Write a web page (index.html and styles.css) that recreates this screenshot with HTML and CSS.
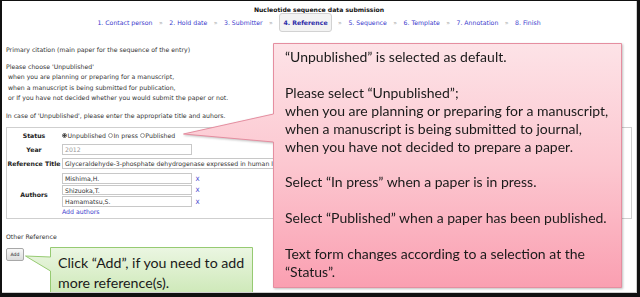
FILE: index.html
```html
<!DOCTYPE html>
<html>

<head>
    <link rel="stylesheet" href="styles.css">
    <title>Nucleotide sequence data submission</title>
</head>

<body>
    <div class="frame">
        <div class="page">
            <h1>Nucleotide sequence data submission</h1>

            <div class="steps">
                <a class="step">1. Contact person</a><span class="sep">&raquo;</span>
                <a class="step">2. Hold date</a><span class="sep">&raquo;</span>
                <a class="step">3. Submitter</a><span class="sep">&raquo;</span>
                <span class="step current">4. Reference</span><span class="sep">&raquo;</span>
                <a class="step">5. Sequence</a><span class="sep">&raquo;</span>
                <a class="step">6. Template</a><span class="sep">&raquo;</span>
                <a class="step">7. Annotation</a><span class="sep">&raquo;</span>
                <a class="step">8. Finish</a>
            </div>

            <p class="lead">Primary citation (main paper for the sequence of the entry)</p>

            <p class="note">Please choose 'Unpublished'<br>
                &nbsp;when you are planning or preparing for a manuscript,<br>
                &nbsp;when a manuscript is being submitted for publication,<br>
                &nbsp;or If you have not decided whether you would submit the paper or not.</p>

            <p class="note2">In case of 'Unpublished', please enter the appropriate title and auhors.</p>

            <div class="refbox">
                <div class="label">Status</div>
                <div class="field radios">
                    <label class="opt"><span class="radio checked"></span>Unpublished</label>
                    <label class="opt"><span class="radio"></span>In press</label>
                    <label class="opt"><span class="radio"></span>Published</label>
                </div>

                <div class="label">Year</div>
                <div class="field"><div class="input short muted">2012</div></div>

                <div class="label">Reference Title</div>
                <div class="field"><div class="input wide">Glyceraldehyde-3-phosphate dehydrogenase expressed in human liver cells</div></div>

                <div class="label">Authors</div>
                <div class="field authors">
                    <div class="author"><div class="input short">Mishima,H.</div><a class="del">X</a></div>
                    <div class="author"><div class="input short">Shizuoka,T.</div><a class="del">X</a></div>
                    <div class="author"><div class="input short">Hamamatsu,S.</div><a class="del">X</a></div>
                    <a class="add-authors">Add authors</a>
                </div>
            </div>

            <p class="other">Other Reference</p>
            <div class="add-btn">Add</div>

            <div class="callout pink">
                <svg class="bubble" width="440" height="246" viewBox="0 0 440 246">
                    <defs>
                        <linearGradient id="pinkfill" x1="0" y1="0" x2="0" y2="1">
                            <stop offset="0" stop-color="#fde3e7"/>
                            <stop offset="0.5" stop-color="#fcc7d0"/>
                            <stop offset="1" stop-color="#fa9fb1"/>
                        </linearGradient>
                    </defs>
                    <path d="M90.5,0.5 H438.5 V244.5 H90.5 V99 L0.5,91 L90.5,71 Z" fill="url(#pinkfill)" stroke="#e58ea0" stroke-width="1"/>
                </svg>
                <div class="callout-text">
                    “Unpublished” is selected as default.<br>
                    <br>
                    Please select “Unpublished”;<br>
                    when you are planning or preparing for a manuscript,<br>
                    when a manuscript is being submitted to journal,<br>
                    when you have not decided to prepare a paper.<br>
                    <br>
                    Select “In press” when a paper is in press.<br>
                    <br>
                    Select “Published” when a paper has been published.<br>
                    <br>
                    Text form changes according to a selection at the<br>
                    “Status”.
                </div>
            </div>

            <div class="callout green">
                <svg class="bubble" width="230" height="60" viewBox="0 0 230 60">
                    <defs>
                        <linearGradient id="greenfill" x1="0" y1="0" x2="0" y2="1">
                            <stop offset="0" stop-color="#ebf6e2"/>
                            <stop offset="1" stop-color="#c6e5ad"/>
                        </linearGradient>
                    </defs>
                    <path d="M25.5,0.5 H227.5 V59.5 H25.5 V24 L0.5,9 L25.5,10 Z" fill="url(#greenfill)" stroke="#96ca72" stroke-width="1"/>
                </svg>
                <div class="callout-text">
                    Click “Add”, if you need to add<br>
                    more reference(s).
                </div>
            </div>
        </div>
    </div>
</body>

</html>
```

FILE: styles.css
```css
body {
    margin: 0;
    background: #fff;
}

.frame {
    width: 640px;
    height: 297px;
    box-sizing: border-box;
    padding: 1px 3px 4px 2px;
    background: #111;
}

.page {
    position: relative;
    height: 100%;
    box-sizing: border-box;
    padding: 0 4px;
    overflow: hidden;
    background: #fff;
    border-right: 1px solid #cfcfcf;
    border-bottom: 1px solid #cfcfcf;
    font-family: "DejaVu Sans", Verdana, sans-serif;
    font-size: 6.2px;
    color: #333;
}

h1 {
    margin: 0;
    padding-top: 4px;
    line-height: 10px;
    font-size: 6.1px;
    text-align: center;
    color: #111;
}

.steps {
    display: flex;
    align-items: center;
    justify-content: center;
    height: 19px;
    margin-top: -2px;
}

.step {
    color: #3838cc;
}

.sep {
    margin: 0 6.5px;
    color: #aaa;
}

.current {
    display: flex;
    align-items: center;
    height: 17px;
    padding: 0 3px;
    border: 1px solid #d2d2d2;
    border-radius: 3px;
    background: #f3f3f3;
    font-weight: bold;
    color: #2a2aa8;
}

p {
    margin: 0;
    line-height: 10.3px;
}

.lead {
    margin-top: 13px;
}

.note {
    margin-top: 6.7px;
}

.note2 {
    margin-top: 7.8px;
}

.refbox {
    display: grid;
    grid-template-columns: 54px 1fr;
    column-gap: 1px;
    row-gap: 3px;
    margin-top: 5.8px;
    padding: 2px 0 1.5px;
    border: 1px solid #cfcfcf;
}

.label {
    display: flex;
    align-items: center;
    justify-content: center;
    font-weight: bold;
    color: #222;
    white-space: nowrap;
}

.field {
    display: flex;
    align-items: center;
    min-width: 0;
}

.radios {
    height: 11px;
    gap: 2px;
}

.opt {
    display: flex;
    align-items: center;
}

.radio {
    display: inline-block;
    box-sizing: border-box;
    width: 5px;
    height: 5px;
    margin-right: 0.5px;
    border: 1px solid #999;
    border-radius: 50%;
    background: #fff;
}

.radio.checked {
    border-color: #666;
    background: radial-gradient(circle, #444 0 1.2px, #fff 1.4px);
}

.input {
    box-sizing: border-box;
    height: 11px;
    padding: 0 2px;
    border: 1px solid #c8c8c8;
    background: #fff;
    line-height: 9px;
    white-space: nowrap;
    overflow: hidden;
}

.short {
    width: 130px;
}

.wide {
    width: 420px;
}

.muted {
    color: #999;
}

.authors {
    flex-direction: column;
    align-items: flex-start;
    padding-top: 1px;
}

.author {
    display: flex;
    align-items: center;
    margin-bottom: 1px;
}

.author .input {
    height: 10.5px;
}

.del {
    margin-left: 3.5px;
    color: #3838cc;
    font-size: 6px;
}

.add-authors {
    line-height: 8.5px;
    color: #3838cc;
}

.other {
    margin-top: 13.5px;
}

.add-btn {
    width: 18px;
    height: 13px;
    margin-top: 5.5px;
    box-sizing: border-box;
    border: 1px solid #a8a8a8;
    border-radius: 2px;
    background: linear-gradient(#f8f8f8, #dcdcdc);
    font-size: 4.6px;
    line-height: 11px;
    text-align: center;
    color: #222;
}

/* annotation balloons drawn over the form */
.callout {
    position: absolute;
}

.bubble {
    display: block;
}

.callout-text {
    position: absolute;
    font-family: Lato, "Liberation Sans", sans-serif;
    color: #1a1a1a;
    white-space: nowrap;
}

.pink {
    left: 181px;
    top: 42px;
    filter: drop-shadow(1px 1px 1px rgba(0, 0, 0, 0.25));
}

.pink .callout-text {
    left: 102px;
    top: 5px;
    font-size: 14px;
    line-height: 17.9px;
}

.green {
    left: 23px;
    top: 246px;
}

.green .callout-text {
    left: 33px;
    top: 6px;
    font-size: 14.2px;
    line-height: 20px;
}
```
